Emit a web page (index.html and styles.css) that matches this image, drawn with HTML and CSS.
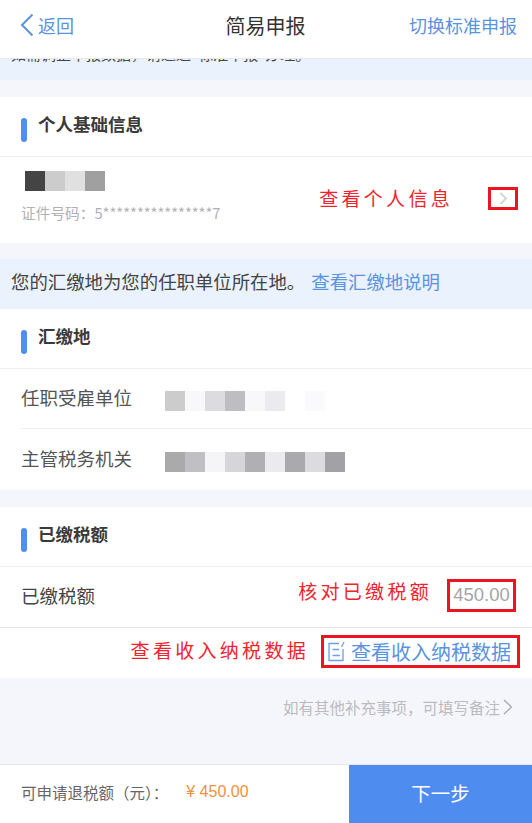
FILE: index.html
```html
<!DOCTYPE html>
<html lang="zh-CN">
<head>
  <meta charset="UTF-8">
  <title>简易申报</title>
  <link rel="stylesheet" href="styles.css">
</head>
<body>
  <div class="page">
    <div class="header">
      <div class="back">
        <svg width="14" height="24" viewBox="0 0 14 24"><path d="M12.500 1.500 2 12l10.500 10.500" fill="none" stroke="#5a93e0" stroke-width="2"/></svg>
        <span>返回</span>
      </div>
      <div class="page-title">简易申报</div>
      <div class="switch">切换标准申报</div>
    </div>

    <!-- 被顶栏盖住的提示 -->
    <div class="notice notice-cut">
      <div class="notice-cut-text">如需调整申报数据，请通过"标准申报"办理。</div>
    </div>

    <div class="card">
      <div class="card-title"><i class="mark"></i>个人基础信息</div>
      <div class="person">
        <div class="person-left">
          <div class="blur blur-name">
            <i style="background:#444"></i><i style="background:#ccc"></i><i style="background:#e0e0e0"></i><i style="background:#a0a0a0"></i>
          </div>
          <div class="id-no">证件号码：5****************7</div>
        </div>
        <div class="note note-person">查看个人信息</div>
        <div class="red-box chevron-box">
          <svg width="9" height="13" viewBox="0 0 9 13"><path d="M1.500 1 7 6.500 1.500 12" fill="none" stroke="#d4d4d8" stroke-width="1.800"/></svg>
        </div>
      </div>
    </div>

    <div class="notice notice-full">
      <span>您的汇缴地为您的任职单位所在地。</span><span class="link">查看汇缴地说明</span>
    </div>

    <div class="card card-flush">
      <div class="card-title"><i class="mark"></i>汇缴地</div>
      <div class="row row-line">
        <div class="row-label">任职受雇单位</div>
        <div class="blur">
          <i style="background:#ccc"></i><i style="background:#f8f8fa"></i><i style="background:#dcdce0"></i><i style="background:#bebec2"></i><i style="background:#f8f8fa"></i><i style="background:#ebebef"></i><i style="background:#fff"></i><i style="background:#fafafc"></i>
        </div>
      </div>
      <div class="row row-last">
        <div class="row-label">主管税务机关</div>
        <div class="blur">
          <i style="background:#aaa"></i><i style="background:#c0c0c4"></i><i style="background:#f5f5f7"></i><i style="background:#d5d5da"></i><i style="background:#b0b0b4"></i><i style="background:#ebebef"></i><i style="background:#aaaaae"></i><i style="background:#dcdce0"></i><i style="background:#a2a2a6"></i>
        </div>
      </div>
    </div>

    <div class="card">
      <div class="card-title"><i class="mark"></i>已缴税额</div>
      <div class="row tax-row">
        <div class="row-label tax-label">已缴税额</div>
        <div class="note note-tax">核对已缴税额</div>
        <div class="red-box amount">450.00</div>
      </div>
      <div class="data-row">
        <div class="note note-data">查看收入纳税数据</div>
        <div class="red-box data-link">
          <svg width="17" height="21" viewBox="0 0 17 21" fill="none" stroke="#6f9fe4" stroke-width="1.300"><path d="M11 2.500H1v17h14V8"/><path d="M4.500 8.500H11M4.500 14.500H12"/><path d="M16 1l-2.500 5"/></svg>
          <span>查看收入纳税数据</span>
        </div>
      </div>
    </div>

    <div class="remark">
      <span>如有其他补充事项，可填写备注</span>
      <svg width="10" height="16" viewBox="0 0 10 16"><path d="M1 1l7.500 7L1 15" fill="none" stroke="#a8a8ac" stroke-width="1.300"/></svg>
    </div>

    <div class="footer">
      <div class="refund">
        <span>可申请退税额（元）：</span>
        <span class="refund-amount">¥ 450.00</span>
      </div>
      <div class="next">下一步</div>
    </div>
  </div>
</body>
</html>
```

FILE: styles.css
```css
html, body { margin:0; padding:0; }
body {
  background:#f4f6fb;
  font-family:"Noto Sans CJK SC", "Liberation Sans", sans-serif;
  color:#333;
}
.page {
  display:flex; flex-direction:column;
  width:532px; height:823px;
  overflow:hidden;
}

/* header */
.header {
  display:flex; align-items:center;
  flex:none;
  height:58px; padding:0 15px 0 20px;
  background:#fff;
  border-bottom:1px solid #e6e8ec;
}
.header > div { margin-top:-8px; }
.back { display:flex; align-items:center; gap:4px; color:#5a93e0; font-size:18px; }
.back svg { display:block; }
.page-title {
  flex:1; text-align:center; font-size:20px;
  padding-left:48px;
}
.switch { color:#5a93e0; font-size:18px; }

/* notices */
.notice { background:#e9f2fd; font-size:18.400px; flex:none; box-sizing:border-box; }
.notice-cut { height:21px; overflow:hidden; padding-left:11px; font-size:15px; }
.notice-cut-text { margin-top:-18px; line-height:26px; white-space:nowrap; color:#444; }
.notice-full {
  display:flex; align-items:center; gap:6px;
  height:50px; margin-top:16px; padding:0 0 6px 11px;
  color:#444;
}
.link { color:#5a93e0; }

/* cards */
.card { background:#fff; margin-top:17px; flex:none; }
.card-flush { margin-top:0; }
.card-title {
  display:flex; align-items:center;
  height:53px; padding:0 0 6px 21px;
  font-size:17.500px; font-weight:bold;
  border-bottom:1px solid #eeeff2;
  color:#3a3a3a;
}
.mark {
  width:6px; height:24px; margin-right:11px;
  margin-top:13px;
  background:#4f8ff2; border-radius:3px;
}

.person {
  display:flex; align-items:center;
  height:86px; padding:0 14px 0 21px;
  box-sizing:border-box;
}
.person-left { flex:1; margin-top:-6px; }
.blur { display:flex; }
.blur i { display:block; width:20px; height:20px; }
.blur-name { margin-left:4px; margin-bottom:11px; }
.id-no { font-size:14.700px; color:#b0b0b5; }

.note { color:#f0232d; font-size:19px; letter-spacing:3.300px; white-space:nowrap; }
.red-box { border:3px solid #ea1520; box-sizing:border-box; }
.note-person { margin-right:35px; margin-top:-6px; }
.chevron-box {
  display:flex; align-items:center; justify-content:center;
  width:30px; height:23px;
  margin-top:-3px;
}

.row {
  display:flex; align-items:center;
  height:60px; padding-left:21px;
  box-sizing:border-box;
  position:relative;
}
.row-last { height:61px; }
.row .blur { margin-top:4px; }
.row-label { width:144px; font-size:18.500px; color:#555; margin-top:-4px; }
.row-line::after {
  content:""; position:absolute; left:21px; right:0; bottom:0;
  border-bottom:1px solid #eeeff2;
}

.tax-row { height:61px; padding-right:16px; border-bottom:1px solid #e3e4e8; }
.tax-label { flex:1; color:#444; margin-top:-5px; }
.note-tax { margin-right:15px; margin-top:-14px; }
.amount {
  display:flex; align-items:center; justify-content:center;
  width:69px; height:33px;
  margin-top:-4px;
  font-family:"Liberation Sans", sans-serif;
  font-size:18.500px; color:#a4a4a8;
}

.data-row {
  display:flex; align-items:center; justify-content:flex-end;
  height:50px; padding-right:12px;
}
.note-data { margin-right:12px; margin-top:-7px; }
.data-link {
  display:flex; align-items:center; gap:6px;
  width:199px; height:33px; padding-left:4px;
  margin-top:-4px;
  color:#5a93e0; font-size:20px; white-space:nowrap;
}
.data-link svg { display:block; }

.remark {
  display:flex; align-items:center; justify-content:flex-end;
  gap:3px;
  height:58px; padding:0 19px 0 0;
  font-size:15.500px; color:#bbbbc0;
  flex:none;
}

/* footer */
.footer {
  display:flex; margin-top:auto;
  height:59px; flex:none;
  background:#fff;
  border-top:1px solid #e6e8ec;
  box-sizing:border-box;
}
.refund {
  flex:1; display:flex; align-items:center; gap:18px;
  padding:0 0 4px 21px;
  font-size:15.500px; color:#666;
}
.refund-amount { color:#f0923c; font-family:"Liberation Sans", sans-serif; font-size:16px; }
.next {
  display:flex; align-items:center; justify-content:center;
  width:183px; padding-bottom:4px;
  background:#4f8cf0; color:#fff; font-size:19.500px;
}
```
